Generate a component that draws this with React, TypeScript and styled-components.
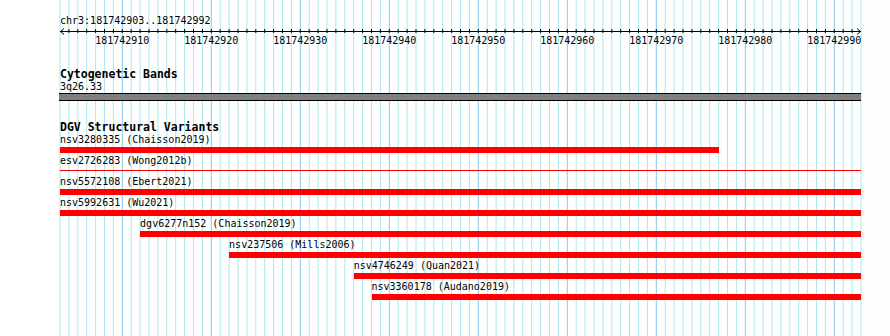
import React from 'react';
import styled, {createGlobalStyle} from 'styled-components';

const ORIGIN = 60;
const BP = 8.9;
const BASES = 90;
const START = 181742903;

const features = [
  {name: 'nsv3280335 (Chaisson2019)', from: 0, to: 74},
  {name: 'esv2726283 (Wong2012b)', from: 0, to: 90, thin: true},
  {name: 'nsv5572108 (Ebert2021)', from: 0, to: 90},
  {name: 'nsv5992631 (Wu2021)', from: 0, to: 90},
  {name: 'dgv6277n152 (Chaisson2019)', from: 9, to: 90},
  {name: 'nsv237506 (Mills2006)', from: 19, to: 90},
  {name: 'nsv4746249 (Quan2021)', from: 33, to: 90},
  {name: 'nsv3360178 (Audano2019)', from: 35, to: 90},
];

const GlobalStyle = createGlobalStyle`
  html, body { margin: 0; padding: 0; background: #fff; }
`;

const Page = styled.div`
  position: relative;
  width: 890px;
  height: 336px;
  overflow: hidden;
  background: linear-gradient(to right, #fff 862px, #fbfefb 862px);
  font-family: "DejaVu Sans Mono", "Liberation Mono", monospace;
  color: #000;
`;

const GridLayer = styled.svg`
  position: absolute;
  left: 0;
  top: 0;
`;

const Tracks = styled.div`
  position: relative;
  display: flex;
  flex-direction: column;
  padding-left: ${ORIGIN}px;
  width: ${BASES * BP}px;
`;

const Location = styled.div`
  margin-top: 15px;
  font-size: 10px;
  line-height: 12px;
  white-space: nowrap;
`;

const RulerSvg = styled.svg`
  display: block;
  overflow: visible;
  font-family: "DejaVu Sans Mono", "Liberation Mono", monospace;
  font-size: 10px;
`;

const TrackTitle = styled.div`
  margin-top: 20px;
  font-size: 11.5px;
  font-weight: bold;
  line-height: 13px;
  white-space: nowrap;
`;

const Label = styled.div`
  font-size: 10px;
  line-height: 12px;
  white-space: nowrap;
`;

const Band = styled.div`
  margin-left: -1px;
  height: 6px;
  border-top: 1px solid #000;
  border-bottom: 1px solid #000;
  background: #808080;
`;

const FeatureRow = styled.div`
  height: 21px;
  display: flex;
  flex-direction: column;
`;

const Bar = styled.div<{ $thin?: boolean }>`
  margin-top: ${p => (p.$thin ? 3 : 1)}px;
  height: ${p => (p.$thin ? 1 : 6)}px;
  background: #f00;
`;

function Grid() {
  const lines = [];
  for (let k = 0; k <= BASES; k++) {
    const x = ORIGIN + k * BP;
    const major = (START + k) % 10 === 0;
    lines.push(<line key={k} x1={x} x2={x} y1={0} y2={336} stroke={major ? '#84caf0' : '#ace8ee'} strokeWidth={1}/>);
  }
  return <GridLayer width={890} height={336}>{lines}</GridLayer>;
}

function Ruler() {
  const w = BASES * BP;
  const ticks = [];
  const labels = [];
  for (let k = 1; k < BASES; k++) {
    const x = k * BP;
    ticks.push(<line key={k} x1={x} x2={x} y1={2} y2={6} stroke="#000"/>);
    if ((START + k) % 10 === 0) {
      labels.push(<text key={k} x={x} y={16.5} textAnchor="middle">{START + k}</text>);
    }
  }
  return (
    <RulerSvg width={w} height={21}>
      <line x1={0} x2={w} y1={4.5} y2={4.5} stroke="#000"/>
      <polyline points="4,1.5 0.5,4.5 4,7.5" fill="none" stroke="#000"/>
      <polyline points={`${w - 4},1.5 ${w - 0.5},4.5 ${w - 4},7.5`} fill="none" stroke="#000"/>
      {ticks}
      {labels}
    </RulerSvg>
  );
}

export default function App() {
  return (
    <Page>
      <GlobalStyle/>
      <Grid/>
      <Tracks>
        <Location>chr3:{START}..{START + BASES - 1}</Location>
        <Ruler/>
        <TrackTitle>Cytogenetic Bands</TrackTitle>
        <Label>3q26.33</Label>
        <Band/>
        <TrackTitle>DGV Structural Variants</TrackTitle>
        {features.map(f => (
          <FeatureRow key={f.name} style={{marginLeft: f.from * BP, width: (f.to - f.from) * BP}}>
            <Label>{f.name}</Label>
            <Bar $thin={f.thin}/>
          </FeatureRow>
        ))}
      </Tracks>
    </Page>
  );
}
